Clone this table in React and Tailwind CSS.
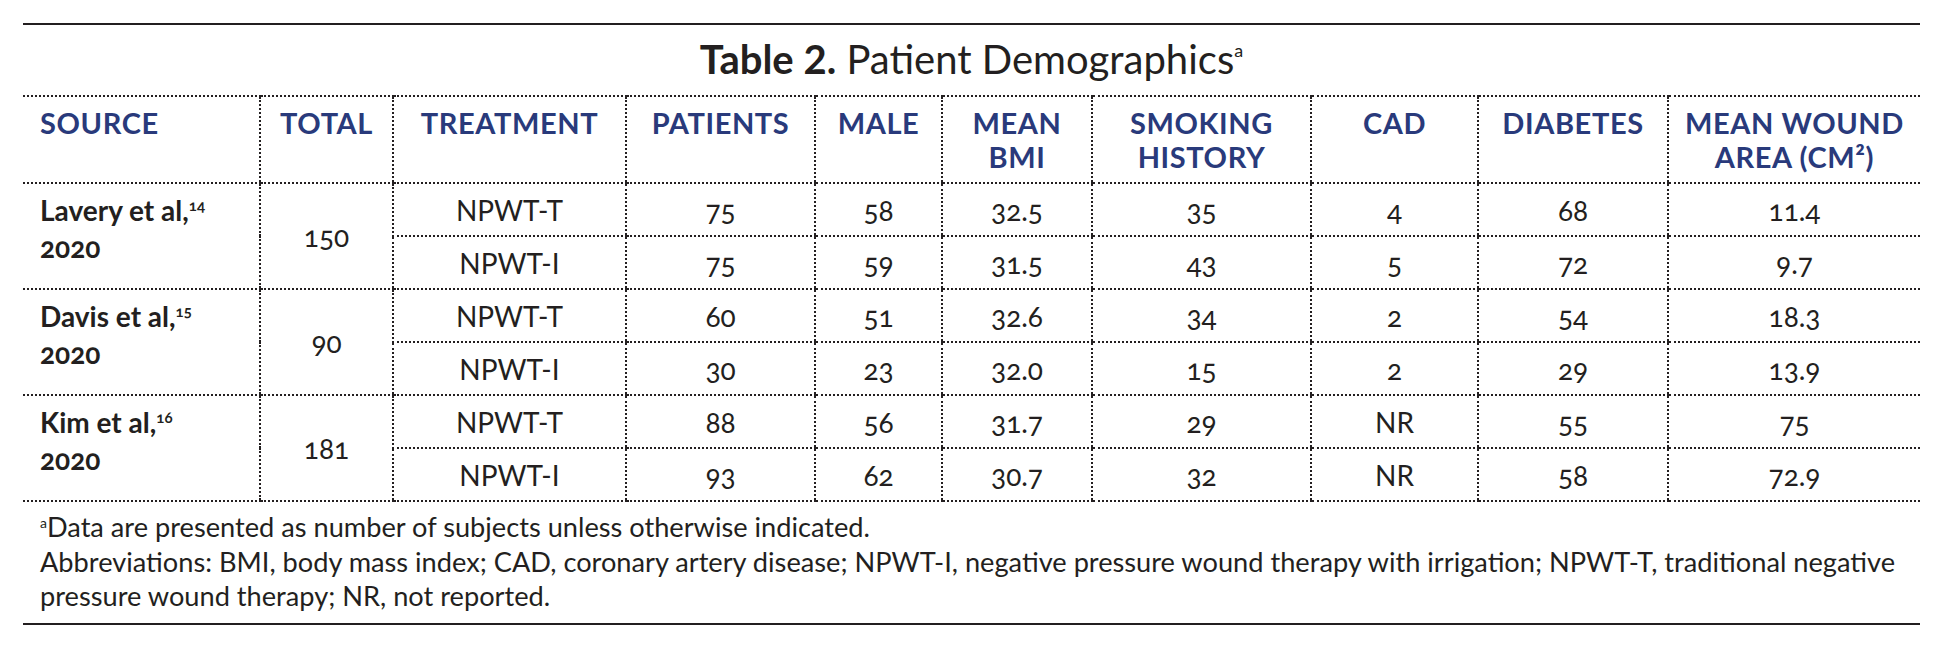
import React from "react"

const headers = [
  { label: "SOURCE", left: true },
  { label: "TOTAL" },
  { label: "TREATMENT" },
  { label: "PATIENTS" },
  { label: "MALE" },
  { label: <>MEAN<br />BMI</> },
  { label: <>SMOKING<br />HISTORY</> },
  { label: "CAD" },
  { label: "DIABETES" },
  { label: <>MEAN WOUND<br />AREA (CM²)</> },
]

const colWidths = [237, 133, 233, 189, 127, 150, 219, 167, 190, 252]

const groups = [
  {
    source: "Lavery et al,",
    ref: "14",
    total: "150",
    rows: [
      ["NPWT-T", "75", "58", "32.5", "35", "4", "68", "11.4"],
      ["NPWT-I", "75", "59", "31.5", "43", "5", "72", "9.7"],
    ],
  },
  {
    source: "Davis et al,",
    ref: "15",
    total: "90",
    rows: [
      ["NPWT-T", "60", "51", "32.6", "34", "2", "54", "18.3"],
      ["NPWT-I", "30", "23", "32.0", "15", "2", "29", "13.9"],
    ],
  },
  {
    source: "Kim et al,",
    ref: "16",
    total: "181",
    rows: [
      ["NPWT-T", "88", "56", "31.7", "29", "NR", "55", "75"],
      ["NPWT-I", "93", "62", "30.7", "32", "NR", "58", "72.9"],
    ],
  },
]

const dot = "border-dotted border-[#231f20]"

export default function App() {
  return (
    <div className="w-[1950px] h-[646px] bg-white font-['Lato',sans-serif] text-[#231f20]">
      <div className="ml-[23px] w-[1897px] pt-[23px]">
        <div className="border-t-2 border-[#231f20]">
          <h2 className="h-[70px] pt-[14px] text-center text-[40px] leading-[40px]">
            <span className="font-bold">Table 2.</span> Patient Demographics
            <sup className="text-[18px] relative -top-[17px]">a</sup>
          </h2>

          <table className="table-fixed border-collapse w-full oldstyle-nums">
            <colgroup>
              {colWidths.map((w, i) => (
                <col key={i} style={{ width: w }} />
              ))}
            </colgroup>
            <thead>
              <tr>
                {headers.map((h, i) => (
                  <th
                    key={i}
                    className={`h-[87px] align-top pt-[9px] font-bold text-[29px] tracking-[0.6px] leading-[34px] text-[#293a7b] border-t-2 border-b-2 ${dot} ${
                      i > 0 ? "border-l-2" : ""
                    } ${h.left ? "text-left pl-[17px]" : "text-center"}`}
                  >
                    {h.label}
                  </th>
                ))}
              </tr>
            </thead>
            <tbody>
              {groups.map((g) =>
                g.rows.map((r, ri) => (
                  <tr key={g.source + ri}>
                    {ri === 0 && (
                      <>
                        <td
                          rowSpan={2}
                          className={`align-top pt-[8px] pl-[17px] font-bold text-[28px] leading-[37px] border-b-2 ${dot}`}
                        >
                          {g.source}
                          <sup className="text-[15px] font-bold relative -top-[10px]">{g.ref}</sup>
                          <br />
                          2020
                        </td>
                        <td
                          rowSpan={2}
                          className={`align-middle text-center text-[28px] border-l-2 border-b-2 ${dot}`}
                        >
                          {g.total}
                        </td>
                      </>
                    )}
                    {r.map((v, ci) => (
                      <td
                        key={ci}
                        className={`h-[53px] align-middle text-center text-[28px] leading-[34px] border-l-2 border-b-2 ${dot}`}
                      >
                        {v}
                      </td>
                    ))}
                  </tr>
                ))
              )}
            </tbody>
          </table>

          <div className="pt-[8px] pb-[9px] pl-[17px] text-[27.2px] leading-[34.5px] border-b-2 border-[#231f20]">
            <p>
              <sup className="text-[14px] relative -top-[9px]">a</sup>Data are presented as number of subjects unless otherwise indicated.
            </p>
            <p>
              Abbreviations: BMI, body mass index; CAD, coronary artery disease; NPWT-I, negative pressure wound therapy with irrigation; NPWT-T, traditional negative
              <br />
              pressure wound therapy; NR, not reported.
            </p>
          </div>
        </div>
      </div>
    </div>
  )
}
